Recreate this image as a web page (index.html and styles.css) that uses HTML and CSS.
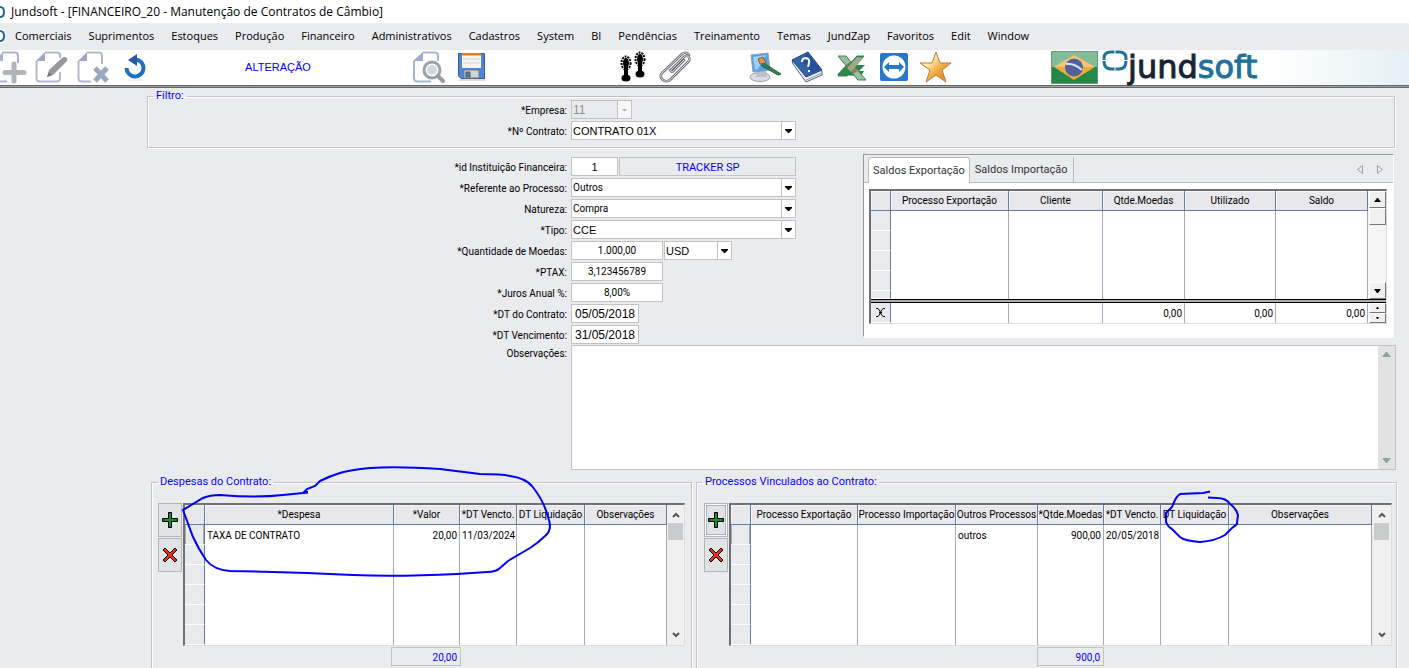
FILE: index.html
```html
<!DOCTYPE html>
<html lang="pt-BR">
<head>
<meta charset="utf-8">
<title>Jundsoft - Manutenção de Contratos de Câmbio</title>
<link rel="stylesheet" href="styles.css">
</head>
<body>
<header class="titlebar">
  <svg class="ring" viewBox="0 0 5 14" aria-hidden="true"><path d="M0 2C3 2 4 4 4 7S3 12 0 12" fill="none" stroke="#1c6a94" stroke-width="2"/></svg>
  <h1 class="title">Jundsoft - [FINANCEIRO_20 - Manutenção de Contratos de Câmbio]</h1>
</header>
<nav class="menubar">
  <svg class="ring" viewBox="0 0 5 14" aria-hidden="true"><path d="M0 0H5V14H0Z" fill="#fff"/><path d="M0 2C3 2 4 4 4 7S3 12 0 12" fill="none" stroke="#1c6a94" stroke-width="2"/></svg>
  <ul class="menu">
    <li><a href="#">Comerciais</a></li><li><a href="#">Suprimentos</a></li><li><a href="#">Estoques</a></li><li><a href="#">Produção</a></li><li><a href="#">Financeiro</a></li><li><a href="#">Administrativos</a></li><li><a href="#">Cadastros</a></li><li><a href="#">System</a></li><li><a href="#">BI</a></li><li><a href="#">Pendências</a></li><li><a href="#">Treinamento</a></li><li><a href="#">Temas</a></li><li><a href="#">JundZap</a></li><li><a href="#">Favoritos</a></li><li><a href="#">Edit</a></li><li><a href="#">Window</a></li>
  </ul>
</nav>
<div class="toolbar">
  <div class="tools tools-edit">
    <button class="tool" aria-label="Novo"><svg viewBox="0 0 32 32"><path d="M9 1.500H22Q25 1.500 25 4.500V12M2 9V27Q2 30.500 5 30.500H14" fill="none" stroke="#a9b2d0" stroke-width="2"/><path d="M1 10L10 1V10Z" fill="#a9b2d0"/><path d="M21 13V30M12 21.500H31" stroke="#b0b3b8" stroke-width="5" stroke-linecap="round"/></svg></button>
    <button class="tool" aria-label="Alterar"><svg viewBox="0 0 32 32"><path d="M10 1.500H22Q25 1.500 25 4V7M1.500 10V27Q1.500 30.500 5 30.500H22Q25 30.500 25 27V21" fill="none" stroke="#b3b8d2" stroke-width="2"/><path d="M1 10L10 1V10Z" fill="#9fa8cc"/><path d="M12 26L14 19L27 7Q30 5 32 7Q33 9 31 11L18 24Z" fill="#96989b"/><path d="M12 26L14 21L17 24Z" fill="#777"/></svg></button>
    <button class="tool" aria-label="Excluir"><svg viewBox="0 0 32 32"><path d="M10 1.500H22Q25 1.500 25 4.500V13M1.500 10V27Q1.500 30.500 5 30.500H14" fill="none" stroke="#b3b8d2" stroke-width="2"/><path d="M1 10L10 1V10Z" fill="#9fa8cc"/><path d="M18 17L30 30M30 17L18 30" stroke="#9ba9bd" stroke-width="5"/></svg></button>
    <button class="tool" aria-label="Desfazer"><svg viewBox="0 0 32 32"><ellipse cx="16" cy="29" rx="9" ry="1.500" fill="#f1f1f1"/><path d="M7.500 17A8.500 8.500 0 1 0 17 8.500" fill="none" stroke="#2170bd" stroke-width="4"/><path d="M18 3L9 9L18 15Z" fill="#2459a5"/></svg></button>
  </div>
  <output class="mode">ALTERAÇÃO</output>
  <div class="tools tools-file">
    <button class="tool" aria-label="Pesquisar"><svg viewBox="0 0 32 32"><path d="M10 1.500H22Q25 1.500 25 4.500V10M1 10V27Q1 30.500 5 30.500H18" fill="none" stroke="#a9b4d3" stroke-width="2"/><path d="M0 10L10 1V10Z" fill="#9fabd0"/><circle cx="19" cy="19" r="8" fill="#fff" stroke="#9da1a5" stroke-width="3"/><circle cx="19" cy="19" r="5" fill="#ccdae6"/><path d="M25 25L30 30" stroke="#97999c" stroke-width="4" stroke-linecap="round"/></svg></button>
    <button class="tool" aria-label="Salvar"><svg viewBox="0 0 32 32"><path d="M4 29H30" stroke="#ddd" stroke-width="2"/><path d="M3.500 2.500H29.500V27.500H6L3.500 25Z" fill="#4f86d3" stroke="#315ba1"/><path d="M7 2H26V17H7Z" fill="#f5f5f5"/><path d="M7 2H26V4.500H7Z" fill="#e47c20"/><path d="M8 8H25M8 12H25" stroke="#d3d3d3"/><path d="M9 19H24V27H9Z" fill="#d2d4ce" stroke="#66788e"/><path d="M11 21H15V26H11Z" fill="#477dbe" stroke="#555"/></svg></button>
  </div>
  <div class="tools tools-track">
    <button class="tool" aria-label="Rastrear"><svg viewBox="0 0 32 32"><g fill="#000"><path d="M7 13H11V25H7Z"/><ellipse cx="9" cy="27" rx="4.500" ry="3.500"/><path d="M21 9H25V20H21Z"/><ellipse cx="23" cy="23" rx="4.500" ry="3.500"/><ellipse cx="9" cy="12" rx="3" ry="5"/><ellipse cx="23" cy="8" rx="3" ry="5"/></g><g fill="none" stroke="#000" stroke-width="2" stroke-dasharray="2 1"><ellipse cx="9" cy="12" rx="4.500" ry="6.500"/><ellipse cx="23" cy="8" rx="4.500" ry="6.500"/></g></svg></button>
    <button class="tool" aria-label="Anexos"><svg viewBox="0 0 32 32"><g fill="none" stroke-linecap="round"><path d="M12 19L24 7Q26 4 29 5Q32 8 29 11L12 28Q8 32 4 29Q0 26 3 22L23 3Q27 0 30 4M11 19Q13 23 16 18L25 9" stroke="#6e6b75" stroke-width="2.500"/><path d="M12 19L24 7Q26 4 29 5Q32 8 29 11L12 28Q8 32 4 29Q0 26 3 22L23 3Q27 0 30 4M11 19Q13 23 16 18L25 9" stroke="#dddbe2"/></g></svg></button>
  </div>
  <div class="tools tools-extra">
    <button class="tool" aria-label="Temas"><svg viewBox="0 0 32 32"><ellipse cx="11" cy="26" rx="10" ry="4.500" fill="#dadde3" stroke="#9aa1ab"/><path d="M8 19H17L18 26H7Z" fill="#b9bfca"/><path d="M2 4L19 2L21 19L4 21Z" fill="#4ea4ec" stroke="#95a0b3"/><path d="M4 6L17 4L9 18L6 19Z" fill="#9ed0fa"/><path d="M13 11L32 23L29 24L13 15Z" fill="#32844b" stroke="#205f38"/><path d="M9 8L14 6L17 12L11 13Z" fill="#e19443" stroke="#8a572d"/></svg></button>
    <button class="tool" aria-label="Ajuda"><svg viewBox="0 0 32 32"><path d="M1 10L16 15L31 20V24L15 31L2 13Z" fill="#eef1f5" stroke="#516181"/><path d="M1 9L17 1L31 19L15 26Z" fill="#3462a7" stroke="#254276"/><path d="M10 10L16 2L30 18L22 22Z" fill="#2450a0"/><path d="M15 29L31 22" stroke="#8997b0"/><path d="M11 11Q11 7 15 7Q19 8 18 12L17 16M18 19V21" stroke="#fff" stroke-width="2" fill="none"/></svg></button>
    <button class="tool" aria-label="Excel"><svg viewBox="0 0 32 32"><path d="M4 24L13 14L27 14H32L26 20H31L28 25Z" fill="#26834a"/><path d="M5 5H13L33 29H25Z" fill="#9cbf9f" stroke="#378253"/><path d="M12 14L17 11L25 20L20 23Z" fill="#8e8065"/><path d="M24 5H31L14 25H5Z" fill="#2e8750" stroke="#378253"/><path d="M24 6L14 17L18 21L30 7Z" fill="#a1a886"/></svg></button>
    <button class="tool" aria-label="Acesso remoto"><svg viewBox="0 0 32 32"><rect x="5" y="2" width="28" height="28" rx="2" fill="#2777cc"/><circle cx="19" cy="16" r="11.500" fill="#fff"/><path d="M9 16L14 11V14H24V11L29 16L24 21V18H14V21Z" fill="#2677c7"/></svg></button>
    <button class="tool" aria-label="Favoritos"><svg viewBox="0 0 32 32"><defs><linearGradient id="star" x1="0" y1="0" x2="1" y2="1"><stop offset=".3" stop-color="#fff0b4"/><stop offset=".6" stop-color="#efa640"/><stop offset="1" stop-color="#d77c24"/></linearGradient></defs><path d="M19 1L23 12H34L25 19L29 31L19 24L9 31L13 19L3 12H15Z" fill="url(#star)" stroke="#b47a39"/></svg></button>
  </div>
  <div class="brand">
    <svg class="flag" viewBox="0 0 47 33" role="img" aria-label="Brasil"><rect x=".5" y=".5" width="46" height="32" fill="#248848" stroke="#62997b"/><path d="M1 1H46V16H1Z" fill="#83bc98"/><path d="M3 16L23 4L44 16L23 29Z" fill="#eeaa3b"/><path d="M3 16L23 4L44 16Z" fill="#f2c576"/><circle cx="23" cy="16.500" r="9" fill="#4f609c"/><path d="M15 13Q23 12 31 19" stroke="#d7dfef" stroke-width="2" fill="none"/></svg>
    <svg class="mark" viewBox="0 0 26 22" aria-hidden="true"><path d="M12.500 2H9Q2 2 2 8V10M13.500 2H17Q24 2 24 8V10M2 11Q2 19 9 19H12.500M24 11Q24 19 17 19H13.500" fill="none" stroke="#21709c" stroke-width="3"/></svg>
    <span class="wordmark"><span class="dark">jund</span>soft</span>
  </div>
</div>
<main class="workspace">
  <fieldset class="group filter">
    <legend>Filtro:</legend>
    <div class="form">
      <label for="empresa">*Empresa:</label>
      <div><select id="empresa" class="field combo code" disabled><option>11</option></select></div>
      <label for="contrato">*Nº Contrato:</label>
      <div><select id="contrato" class="field combo wide large"><option>CONTRATO 01X</option></select></div>
    </div>
  </fieldset>
  <div class="details">
    <div class="form">
      <label for="inst">*id Instituição Financeira:</label>
      <div class="pair"><input id="inst" class="field id large" value="1"><output class="field bank">TRACKER SP</output></div>
      <label for="ref">*Referente ao Processo:</label>
      <div><select id="ref" class="field combo wide"><option>Outros</option></select></div>
      <label for="nat">Natureza:</label>
      <div><select id="nat" class="field combo wide"><option>Compra</option></select></div>
      <label for="tipo">*Tipo:</label>
      <div><select id="tipo" class="field combo wide large"><option>CCE</option></select></div>
      <label for="qtd">*Quantidade de Moedas:</label>
      <div class="pair"><input id="qtd" class="field number" value="1.000,00"><select class="field combo currency large" aria-label="Moeda"><option>USD</option></select></div>
      <label for="ptax">*PTAX:</label>
      <div><input id="ptax" class="field number" value="3,123456789"></div>
      <label for="juros">*Juros Anual %:</label>
      <div><input id="juros" class="field number" value="8,00%"></div>
      <label for="dtc">*DT do Contrato:</label>
      <div><input id="dtc" class="field date" value="05/05/2018"></div>
      <label for="dtv">*DT Vencimento:</label>
      <div><input id="dtv" class="field date" value="31/05/2018"></div>
    </div>
    <section class="balances">
      <div class="tabs" role="tablist">
        <button class="tab active" role="tab" aria-selected="true">Saldos Exportação</button>
        <button class="tab" role="tab" aria-selected="false">Saldos Importação</button>
        <div class="pager">
          <button aria-label="Aba anterior"><svg viewBox="0 0 6 9"><path d="M5.500 .5V8.500L.5 4.500Z" fill="none" stroke="#92a69e"/></svg></button>
          <button aria-label="Próxima aba"><svg viewBox="0 0 6 9"><path d="M.5 .5V8.500L5.500 4.500Z" fill="none" stroke="#92a69e"/></svg></button>
        </div>
      </div>
      <div class="tabpanel">
        <div class="frame">
          <div class="scroller">
            <table class="grid">
              <colgroup><col class="c-sel"><col class="s-proc"><col class="s-cli"><col class="s-qtd"><col class="s-uti"><col class="s-sal"></colgroup>
              <thead><tr><th></th><th>Processo Exportação</th><th>Cliente</th><th>Qtde.Moedas</th><th>Utilizado</th><th>Saldo</th></tr></thead>
              <tbody>
                <tr><td></td><td></td><td></td><td></td><td></td><td></td></tr>
                <tr><td></td><td></td><td></td><td></td><td></td><td></td></tr>
                <tr><td></td><td></td><td></td><td></td><td></td><td></td></tr>
                <tr><td></td><td></td><td></td><td></td><td></td><td></td></tr>
                <tr class="partial"><td></td><td></td><td></td><td></td><td></td><td></td></tr>
              </tbody>
            </table>
            <div class="classic-bar">
              <button aria-label="Subir"><svg viewBox="0 0 7 4"><path d="M0 4H7L4 0H3Z"/></svg></button>
              <span class="thumb"></span>
              <button class="last" aria-label="Descer"><svg viewBox="0 0 7 4"><path d="M0 0H7L4 4H3Z"/></svg></button>
            </div>
          </div>
          <div class="scroller summary">
            <table class="grid">
              <colgroup><col class="c-sel"><col class="s-proc"><col class="s-cli"><col class="s-qtd"><col class="s-uti"><col class="s-sal"></colgroup>
              <tbody><tr><td class="mark-cell"><svg viewBox="0 0 9 9"><path d="M0 .5H2L4 3V6L2 8.500H0M9 .5H7L5 3V6L7 8.500H9M3 4.500H6" fill="none" stroke="#000"/></svg></td><td></td><td></td><td class="num">0,00</td><td class="num">0,00</td><td class="num">0,00</td></tr></tbody>
            </table>
            <div class="spinner">
              <button aria-label="Anterior"><svg viewBox="0 0 3 2"><path d="M0 2H3L2 0H1Z"/></svg></button>
              <button aria-label="Próximo"><svg viewBox="0 0 3 2"><path d="M0 0H3L2 2H1Z"/></svg></button>
            </div>
          </div>
        </div>
      </div>
    </section>
  </div>
  <div class="form notes">
    <label for="obs">Observações:</label>
    <div class="memo">
      <textarea id="obs"></textarea>
      <div class="memo-bar">
        <svg viewBox="0 0 9 5"><path d="M0 5H9L5 0H4Z" fill="#91a39b"/></svg>
        <svg viewBox="0 0 9 5"><path d="M0 0H9L5 5H4Z" fill="#91a39b"/></svg>
      </div>
    </div>
  </div>
  <div class="lists">
    <fieldset class="group list expenses">
      <legend>Despesas do Contrato:</legend>
      <div class="list-body">
        <div class="actions">
          <button aria-label="Adicionar despesa"><svg viewBox="0 0 16 16"><path d="M6.500 .5H9.500V6.500H15.500V9.500H9.500V15.500H6.500V9.500H.5V6.500H6.500Z" fill="#198a35" stroke="#000"/></svg></button>
          <button aria-label="Remover despesa"><svg viewBox="0 0 16 16"><path d="M1 3L3 1L8 6L13 1L15 3L10 8L15 13L13 15L8 10L3 15L1 13L6 8Z" fill="#e62e16" stroke="#000"/></svg></button>
        </div>
        <div class="frame">
          <div class="scroller">
            <table class="grid">
              <colgroup><col class="c-sel"><col class="e-desp"><col class="e-val"><col class="e-ven"><col class="e-liq"><col class="e-obs"></colgroup>
              <thead><tr><th></th><th>*Despesa</th><th>*Valor</th><th>*DT Vencto.</th><th>DT Liquidação</th><th>Observações</th></tr></thead>
              <tbody>
                <tr class="current"><td></td><td>TAXA DE CONTRATO</td><td class="num">20,00</td><td>11/03/2024</td><td></td><td></td></tr>
                <tr><td></td><td></td><td></td><td></td><td></td><td></td></tr>
                <tr><td></td><td></td><td></td><td></td><td></td><td></td></tr>
                <tr><td></td><td></td><td></td><td></td><td></td><td></td></tr>
                <tr><td></td><td></td><td></td><td></td><td></td><td></td></tr>
                <tr><td></td><td></td><td></td><td></td><td></td><td></td></tr>
              </tbody>
            </table>
            <div class="modern-bar">
              <svg viewBox="0 0 8 6"><path d="M1 5L4 2L7 5" fill="none" stroke="#555" stroke-width="2"/></svg>
              <span class="thumb"></span>
              <svg class="last" viewBox="0 0 8 6"><path d="M1 1L4 4L7 1" fill="none" stroke="#555" stroke-width="2"/></svg>
            </div>
          </div>
        </div>
      </div>
      <output class="total">20,00</output>
      <svg class="ink" viewBox="0 0 370 112" width="370" height="112" aria-hidden="true"><path transform="translate(-182 -466)" d="M308 492L304 492L307 489L315 486L320 481Q330 476 340 473T370 468Q397 466 440 469L480 474Q502 474 510 476Q525 478 532 486Q544 501 548 517Q553 530 545 536Q538 543 530 548L508 561L500 568Q496 572 487 572L457 574Q395 577 353 575L307 573L273 572L230 571Q214 570 206 560Q198 548 193 537L183 510L203 498Q210 495 220 495Q257 498 283 495L308 492.500" fill="none" stroke="#0000f5" stroke-width="2"/></svg>
    </fieldset>
    <fieldset class="group list processes">
      <legend>Processos Vinculados ao Contrato:</legend>
      <div class="list-body">
        <div class="actions">
          <button class="focused" aria-label="Adicionar processo"><svg viewBox="0 0 16 16"><path d="M6.500 .5H9.500V6.500H15.500V9.500H9.500V15.500H6.500V9.500H.5V6.500H6.500Z" fill="#198a35" stroke="#000"/></svg></button>
          <button aria-label="Remover processo"><svg viewBox="0 0 16 16"><path d="M1 3L3 1L8 6L13 1L15 3L10 8L15 13L13 15L8 10L3 15L1 13L6 8Z" fill="#e62e16" stroke="#000"/></svg></button>
        </div>
        <div class="frame">
          <div class="scroller">
            <table class="grid">
              <colgroup><col class="c-sel"><col class="p-exp"><col class="p-imp"><col class="p-out"><col class="p-qtd"><col class="p-ven"><col class="p-liq"><col class="p-obs"></colgroup>
              <thead><tr><th></th><th>Processo Exportação</th><th>Processo Importação</th><th>Outros Processos</th><th>*Qtde.Moedas</th><th>*DT Vencto.</th><th>DT Liquidação</th><th>Observações</th></tr></thead>
              <tbody>
                <tr class="current"><td></td><td></td><td></td><td>outros</td><td class="num">900,00</td><td>20/05/2018</td><td></td><td></td></tr>
                <tr><td></td><td></td><td></td><td></td><td></td><td></td><td></td><td></td></tr>
                <tr><td></td><td></td><td></td><td></td><td></td><td></td><td></td><td></td></tr>
                <tr><td></td><td></td><td></td><td></td><td></td><td></td><td></td><td></td></tr>
                <tr><td></td><td></td><td></td><td></td><td></td><td></td><td></td><td></td></tr>
                <tr><td></td><td></td><td></td><td></td><td></td><td></td><td></td><td></td></tr>
              </tbody>
            </table>
            <div class="modern-bar">
              <svg viewBox="0 0 8 6"><path d="M1 5L4 2L7 5" fill="none" stroke="#555" stroke-width="2"/></svg>
              <span class="thumb"></span>
              <svg class="last" viewBox="0 0 8 6"><path d="M1 1L4 4L7 1" fill="none" stroke="#555" stroke-width="2"/></svg>
            </div>
          </div>
        </div>
      </div>
      <output class="total">900,0</output>
      <svg class="ink" viewBox="0 0 76 54" width="76" height="54" aria-hidden="true"><path transform="translate(-1164 -490)" d="M1210 491.500L1203 493L1180 494Q1177 496 1175 500L1172 507L1166 513V522Q1168 527 1172 529L1180 537Q1185 541 1200 542Q1215 541 1225 535Q1230 530 1232 528Q1238 524 1237 523L1238 515Q1236 508 1230 504Q1226 498 1217 498L1208 497.500" fill="none" stroke="#0000f5" stroke-width="2"/></svg>
    </fieldset>
  </div>
</main>
</body>
</html>
```
FILE: styles.css
```css
* { box-sizing: border-box; }
html { height: 100%; }
body {
  margin: 0;
  height: 100%;
  overflow: hidden;
  background: #eaebef;
  color: #000;
  font-family: Roboto, "Liberation Sans", sans-serif;
  font-size: 10px;
}
button, input, select, textarea { margin: 0; padding: 0; border: 0; border-radius: 0; font: inherit; color: inherit; background: none; }
svg { display: block; }

.titlebar { display: flex; align-items: center; gap: 6px; height: 23px; background: #fff; }
.ring { width: 5px; height: 14px; }
.title { margin: 0; font: 400 12px/16px "Open Sans", sans-serif; }
.menubar { display: flex; align-items: center; gap: 10px; height: 27px; padding-bottom: 2px; font: 11px/16px "Open Sans", sans-serif; }
.menu { display: flex; gap: 17px; margin: 0; padding: 0; list-style: none; }
.menu a { color: inherit; text-decoration: none; }

.toolbar { display: flex; height: 36px; margin-bottom: 2px; background: #fff; border-bottom: 1px solid #63676a; box-shadow: 0 1px #9fa1a3, 0 2px #63676a; }
.tools { display: flex; gap: 10px; padding-top: 1px; }
.tool, .tool svg { width: 32px; height: 32px; }
.tool svg { overflow: visible; }
.tools-edit { margin-left: -7px; }
.mode { width: 254px; margin-right: 8px; padding-top: 9px; text-align: center; color: #00f; font: 11px/16px "Liberation Sans", sans-serif; }
.tools-track { margin-left: 130px; }
.tools-extra { margin-left: 58px; }
.brand { display: flex; flex: 1; margin-left: 102px; background: linear-gradient(90deg, #fff 60%, #e4f0f5); }
.flag { width: 47px; height: 33px; margin-top: 1px; }
.mark { width: 26px; height: 22px; margin-left: 4px; }
.wordmark { color: #22719c; font: 32px/34px "DejaVu Sans", sans-serif; -webkit-text-stroke: 1px; }
.wordmark .dark { color: #182434; }

.workspace { padding: 1px 12px 0 147px; }
.group { position: relative; min-width: 0; margin: 0; padding: 0; border: 1px solid #c2c2c4; box-shadow: inset 1px 1px #fff, 1px 1px #fff; }
.group legend { margin-left: 5px; padding: 0 3px; color: #00f; font-size: 11px; line-height: 14px; }
.filter { height: 59px; margin-right: 2px; }
.form { display: grid; grid-template-columns: 420px 1fr; column-gap: 4px; row-gap: 2px; grid-auto-rows: 19px; }
.filter .form { margin-top: -3px; margin-left: -1px; }
.form label { text-align: right; line-height: 21px; white-space: nowrap; }
.field { display: block; height: 19px; border: 1px solid #c2c2c4; background: #fff; }
.large { font-family: "Liberation Sans", sans-serif; font-size: 11px; }
.combo {
  appearance: none;
  padding-left: 1px;
  background: #fff url("data:image/svg+xml,%3Csvg xmlns='http://www.w3.org/2000/svg' width='14' height='17'%3E%3Cpath d='M0 0H1V17H0Z' fill='%23c2c2c4'/%3E%3Cpath d='M4 7H11V8L8 11H7L4 8Z'/%3E%3C/svg%3E") right center no-repeat;
}
.wide { width: 225px; }
.code { width: 61px; opacity: 1; color: #84948a; font: 12px "Liberation Sans", sans-serif; background-color: #eaebef; background-image: url("data:image/svg+xml,%3Csvg xmlns='http://www.w3.org/2000/svg' width='14' height='17'%3E%3Cpath d='M0 0H14V17H0Z' fill='%23f7f7f7'/%3E%3Cpath d='M0 0H1V17H0Z' fill='%23c2c2c4'/%3E%3Cpath d='M5 8H10L8 10H7Z' fill='%23aaa'/%3E%3C/svg%3E"); }
.pair { display: flex; gap: 1px; }
.id { width: 47px; text-align: center; }
.bank { width: 177px; text-align: center; color: #00f; background: #eaebef; font-size: 11px; line-height: 19px; }
.number { width: 92px; text-align: center; }
.currency { width: 68px; }
.date { width: 68px; text-align: center; font: 12px "Liberation Sans", sans-serif; }

.details { display: flex; align-items: flex-start; padding-top: 6px; }
.details .form { width: 649px; padding-top: 3px; flex: none; }
.balances { flex: 1; min-width: 0; height: 183px; margin: 0 3px 0 67px; border: 1px solid #fff; border-top-color: #999; border-left-color: #999; }
.tabs { display: flex; align-items: flex-end; height: 28px; padding-left: 4px; border-bottom: 1px solid #b7b9bc; font-size: 11px; }
.tab { height: 25px; padding: 0 5px; border-right: 1px solid #b7b9bc; color: #333; }
.tab.active { height: 26px; margin-bottom: -1px; padding: 0 4px; background: #fff; border: 1px solid #b7b9bc; border-bottom: 0; border-radius: 3px 3px 0 0; }
.pager { display: flex; gap: 14px; margin-left: auto; padding: 0 10px 8px 0; }
.pager svg { width: 6px; height: 9px; }
.tabpanel { padding: 6px 6px 14px 5px; background: #fff; }
.frame { flex: 1; min-width: 0; background: #fff; border: 2px solid #6e7173; border-right: 1px solid #ddd; border-bottom: 1px solid #ddd; }
.scroller { display: flex; }
.grid { flex: 1; min-width: 0; width: 100%; table-layout: fixed; border-collapse: separate; border-spacing: 0; }
.grid tr { height: 20px; }
.grid th, .grid td { height: 20px; padding: 0; border-right: 1px solid #a2abb9; line-height: 19px; white-space: nowrap; overflow: hidden; }
.grid th { font-weight: 400; background: #e7e7ec; border-right-color: #637c9f; border-bottom: 1px solid #637c9f; box-shadow: inset 1px 1px #f5f5f7; text-align: center; }
.grid td { padding-left: 2px; }
.grid td:first-child { background: #e9eaee; border-right-color: #637c9f; border-bottom: 1px solid #fff; }
.grid .num { padding: 0 2px 0 0; text-align: right; }
.grid .current td:first-child { box-shadow: inset 1px 0 #aaa, inset -1px 0 #aaa; }
.grid .partial td, .grid .partial { height: 8px; line-height: 0; }
.c-sel { width: 20px; }
.s-proc { width: 118px; } .s-cli { width: 94px; } .s-qtd { width: 82px; } .s-uti { width: 91px; } .s-sal { width: 92px; }
.e-desp { width: 189px; } .e-val { width: 66px; } .e-ven { width: 57px; } .e-liq { width: 68px; } .e-obs { width: 82px; }
.p-exp { width: 107px; } .p-imp { width: 98px; } .p-out { width: 82px; } .p-qtd { width: 66px; } .p-ven { width: 57px; } .p-liq { width: 68px; } .p-obs { width: 143px; }
.classic-bar { display: flex; flex-direction: column; width: 18px; background: #f5f5f5; }
.classic-bar button, .classic-bar .thumb { display: flex; align-items: center; justify-content: center; width: 17px; height: 17px; margin-left: 1px; background: #f0f0f0; border: 1px solid #fff; border-right-color: #777; border-bottom-color: #777; }
.classic-bar svg { width: 7px; height: 4px; }
.classic-bar .last, .modern-bar .last { margin-top: auto; }
.summary { border-top: 4px double #000; background: linear-gradient(#aaa, #aaa) border-box; }
.summary .grid { background: #fff; }
.mark-cell svg { width: 9px; height: 9px; margin-left: 3px; }
.spinner { display: grid; grid-template-rows: 10px 10px; width: 18px; background: #fff; }
.spinner button { display: flex; align-items: center; justify-content: center; margin-left: 1px; background: #f0f0f0; border: 1px solid #fff; border-right-color: #777; border-bottom-color: #777; }
.spinner svg { width: 3px; height: 2px; }

.notes { grid-auto-rows: auto; padding-top: 1px; }
.notes label { line-height: 17px; }
.memo { display: flex; height: 125px; margin-right: 1px; border: 1px solid #c2c2c4; background: #fff; }
.memo textarea { flex: 1; resize: none; }
.memo-bar { display: flex; flex-direction: column; justify-content: space-between; align-items: center; width: 17px; padding: 6px 0; background: #e1e2e1; }
.memo-bar svg { width: 9px; height: 5px; }

.lists { display: grid; grid-template-columns: 541fr 701fr; gap: 4px; margin-left: 4px; padding-top: 5px; }
.list { height: 220px; }
.expenses { padding: 0 6px; }
.processes { padding: 0 4px 0 7px; }
.list legend { margin-left: 0; padding: 0 2px; }
.processes legend { margin-left: -1px; }
.list-body { display: flex; gap: 1px; padding-top: 14px; }
.actions { display: flex; flex-direction: column; gap: 1px; }
.actions button { display: flex; align-items: center; justify-content: center; width: 24px; height: 34px; border: 1px solid #b4b5b7; background: #e2e3e4; }
.actions .focused { box-shadow: inset 0 0 0 1px #fff, inset 0 0 0 2px #a5b0d4; }
.actions svg { width: 16px; height: 16px; }
.modern-bar { display: flex; flex-direction: column; align-items: center; width: 19px; padding: 7px 0; background: #f0f0f0; }
.modern-bar svg { width: 8px; height: 6px; }
.modern-bar .thumb { width: 15px; height: 17px; margin-top: 5px; background: #c9cbcc; }
.total { display: block; height: 19px; margin-top: 1px; padding-right: 3px; border: 1px solid #c2c2c4; text-align: right; line-height: 19px; color: #00f; }
.expenses .total { width: 70px; margin-left: 233px; }
.processes .total { width: 67px; margin-left: 333px; }
.ink { position: absolute; overflow: visible; pointer-events: none; }
.expenses .ink { left: 30px; top: -23px; }
.processes .ink { left: 467px; top: 1px; }
```
